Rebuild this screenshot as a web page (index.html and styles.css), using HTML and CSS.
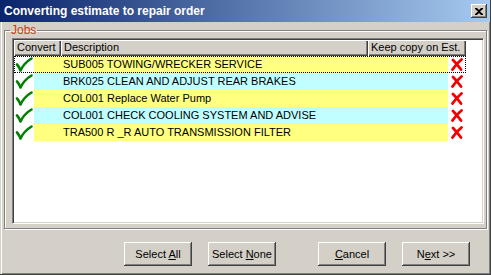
FILE: index.html
```html
<!DOCTYPE html>
<html lang="en">
<head>
  <meta charset="UTF-8" />
  <title>Converting estimate to repair order</title>
  <link rel="stylesheet" href="styles.css">
</head>
<body>
  <div class="window">
    <div class="titlebar">
      <span class="title">Converting estimate to repair order</span>
      <button class="close-btn" aria-label="Close">
        <svg width="8" height="7" viewBox="0 0 8 7"><path d="M0 0h2l2 2 2-2h2v1L5 3.5 8 6v1H6L4 5 2 7H0V6l3-2.5L0 1z" fill="#000"/></svg>
      </button>
    </div>

    <fieldset class="group">
      <legend>Jobs</legend>
      <div class="listview">
        <div class="header">
          <div class="col col-convert">Convert</div>
          <div class="col col-desc">Description</div>
          <div class="col col-keep">Keep copy on Est.</div>
        </div>
        <div class="rows" id="rows"></div>
      </div>
    </fieldset>

    <div class="buttons">
      <button class="btn">Select <u>A</u>ll</button>
      <button class="btn">Select <u>N</u>one</button>
      <button class="btn btn-gap"><u>C</u>ancel</button>
      <button class="btn">N<u>e</u>xt &gt;&gt;</button>
    </div>
  </div>

  <script>
    const jobs = [
      'SUB005 TOWING/WRECKER SERVICE',
      'BRK025 CLEAN AND ADJUST REAR BRAKES',
      'COL001 Replace Water Pump',
      'COL001 CHECK COOLING SYSTEM AND ADVISE',
      'TRA500 R _R AUTO TRANSMISSION FILTER'
    ];
    const rowsEl = document.getElementById('rows');

    const checkSvg = '<svg width="18" height="15" viewBox="0 0 18 15"><path d="M2 7.5 Q4 9.5 5.5 13.5 Q9 6 16.5 1.5" fill="none" stroke="#008000" stroke-width="2.6" stroke-linecap="round" stroke-linejoin="round"/></svg>';
    const crossSvg = '<svg width="12" height="13" viewBox="0 0 12 13"><path d="M2 2 Q6 6 10 11.5 M10.5 1.5 Q5 6 1.5 11.5" fill="none" stroke="#f00000" stroke-width="2.8" stroke-linecap="round"/></svg>';

    jobs.forEach((text, i) => {
      const row = document.createElement('div');
      row.className = 'row ' + (i % 2 ? 'row-cyan' : 'row-yellow');
      if (i === 0) row.classList.add('focused');
      row.innerHTML =
        '<span class="cell-check">' + checkSvg + '</span>' +
        '<span class="cell-text">' + text + '</span>' +
        '<span class="cell-cross">' + crossSvg + '</span>';
      rowsEl.appendChild(row);
    });
  </script>
</body>
</html>
```

FILE: styles.css
```css
body {
  margin: 0;
  font-family: "Liberation Sans", Arial, sans-serif;
  font-size: 11px;
  color: #000;
  background: #d4d0c8;
}
.window {
  width: 491px;
  height: 275px;
  box-sizing: border-box;
  background: #d4d0c8;
  border-right: 1px solid #404040;
  border-bottom: 1px solid #404040;
  box-shadow: inset 1px 0 #d4d0c8, inset 2px 0 #fff, inset -1px -1px #808080;
  display: flex;
  flex-direction: column;
}
.titlebar {
  height: 22px;
  background: linear-gradient(to right, #0a246a, #a6caf0);
  display: flex;
  align-items: center;
  justify-content: space-between;
  padding: 0 3px 0 4px;
  flex-shrink: 0;
}
.title {
  color: #fff;
  font-weight: bold;
  font-size: 12px;
}
.close-btn {
  width: 16px;
  height: 14px;
  padding: 0;
  margin: 0;
  background: #d4d0c8;
  border: none;
  box-shadow: inset -1px -1px #404040, inset 1px 1px #fff, inset -2px -2px #808080;
  display: flex;
  align-items: center;
  justify-content: center;
}
.group {
  margin: 2px 3px 0 4px;
  padding: 1px 2px 4px 7px;
  border: 1px solid #808080;
  box-shadow: inset 1px 1px #fff, 1px 1px #fff;
  height: 205px;
  box-sizing: border-box;
  flex-shrink: 0;
}
.group legend {
  color: #c83c0a;
  font-size: 12px;
  padding: 0 1px;
  margin-left: -2px;
  line-height: 13px;
}
.listview {
  height: 186px;
  box-sizing: border-box;
  background: #fff;
  border: 1px solid;
  border-color: #808080 #fff #fff #808080;
  box-shadow: inset 1px 1px #404040, inset -1px -1px #d4d0c8;
  padding: 1px;
}
.header {
  display: flex;
  height: 16px;
}
.col {
  box-sizing: border-box;
  height: 16px;
  line-height: 15px;
  padding-left: 3px;
  background: #d4d0c8;
  box-shadow: inset 1px 1px #fff, inset -1px -1px #404040, inset -2px -2px #808080;
  white-space: nowrap;
}
.col-convert { width: 47px; }
.col-desc { width: 307px; }
.col-keep { width: 98px; }
.rows {
  width: 452px;
}
.row {
  display: flex;
  height: 17px;
  align-items: center;
  box-sizing: border-box;
}
.row.focused {
  outline: 1px dotted #000;
  outline-offset: -1px;
}
.cell-check {
  width: 20px;
  height: 17px;
  display: flex;
  align-items: center;
  justify-content: center;
  background: #fff;
}
.cell-text {
  width: 414px;
  height: 17px;
  line-height: 17px;
  padding-left: 29px;
  box-sizing: border-box;
  white-space: nowrap;
}
.row-yellow .cell-text { background: #ffff80; }
.row-cyan .cell-text { background: #c0ffff; }
.cell-cross {
  width: 18px;
  height: 17px;
  display: flex;
  align-items: center;
  justify-content: center;
}
.buttons {
  flex: 1;
  display: flex;
  align-items: flex-start;
  justify-content: flex-end;
  padding: 13px 20px 0 0;
  gap: 16px;
}
.btn {
  width: 68px;
  height: 24px;
  padding: 0;
  font-family: "Liberation Sans", Arial, sans-serif;
  font-size: 11px;
  color: #000;
  background: #d4d0c8;
  border: none;
  box-shadow: inset -1px -1px #404040, inset 1px 1px #fff, inset -2px -2px #808080;
}
.btn-gap {
  margin-left: 26px;
}
```
